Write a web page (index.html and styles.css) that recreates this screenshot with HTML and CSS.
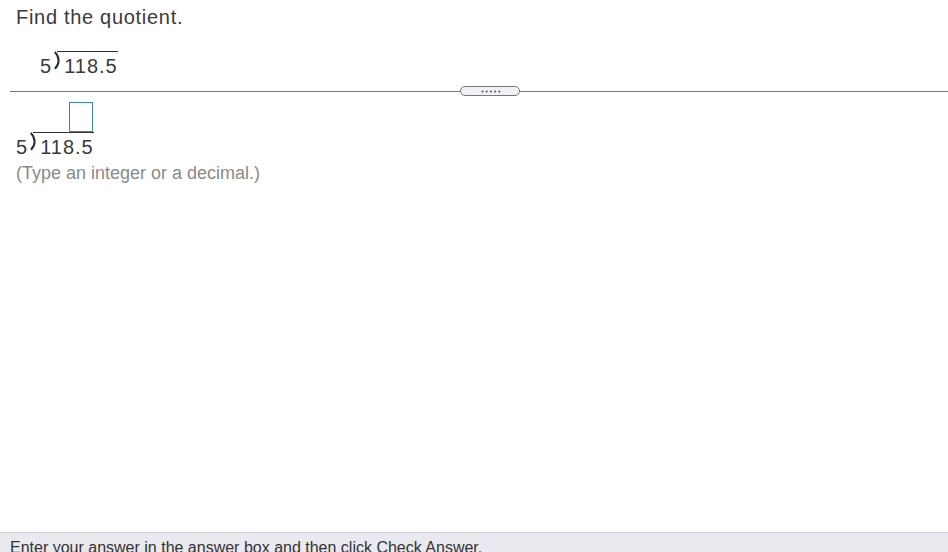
FILE: index.html
```html
<!DOCTYPE html>
<html>
<head>
<meta charset="utf-8">
<link rel="stylesheet" href="styles.css">
</head>
<body>
<div class="page">
  <div class="question">
    <div class="prompt">Find the quotient.</div>
    <div class="longdiv q-div">
      <span class="divisor">5</span>
      <svg class="bracket" width="7" height="25" viewBox="0 0 7 25"><path d="M1.8 0.8 Q5.6 5 5.6 9.5 Q5.6 14 2 17.8" fill="none" stroke="#2a2a2a" stroke-width="2"/></svg>
      <span class="dividend">118.5</span>
    </div>
  </div>
  <div class="divider">
    <div class="handle">
      <svg width="20" height="3" viewBox="0 0 20 3"><circle cx="1.5" cy="1.5" r="1" fill="#555"/><circle cx="5.7" cy="1.5" r="1" fill="#555"/><circle cx="9.9" cy="1.5" r="1" fill="#555"/><circle cx="14.1" cy="1.5" r="1" fill="#555"/><circle cx="18.3" cy="1.5" r="1" fill="#555"/></svg>
    </div>
  </div>
  <div class="answer">
    <div class="ans-div">
      <div class="quot-row"><span class="ansbox"></span></div>
      <div class="longdiv">
        <span class="divisor">5</span>
        <svg class="bracket" width="7" height="25" viewBox="0 0 7 25"><path d="M1.8 0.8 Q5.6 5 5.6 9.5 Q5.6 14 2 17.8" fill="none" stroke="#2a2a2a" stroke-width="2"/></svg>
        <span class="dividend">118.5</span>
      </div>
    </div>
    <div class="hint">(Type an integer or a decimal.)</div>
  </div>
  <div class="footer">Enter your answer in the answer box and then click Check Answer.</div>
</div>
</body>
</html>
```
FILE: styles.css
```css
html, body {
  margin: 0;
  padding: 0;
  background: #fff;
}
.page {
  width: 948px;
  height: 552px;
  overflow: hidden;
  font-family: "Liberation Sans", Arial, sans-serif;
  color: #3a3a3a;
  display: flex;
  flex-direction: column;
}
.question {
  padding: 5px 16px 0 16px;
}
.prompt {
  font-size: 20px;
  letter-spacing: 0.7px;
  line-height: 24px;
}
.longdiv {
  display: inline-flex;
  align-items: flex-end;
  font-size: 20px;
  letter-spacing: 1px;
  line-height: 20px;
}
.q-div {
  margin-top: 22px;
  margin-left: 24px;
}
.divisor {
  margin-right: 1px;
}
.bracket {
  display: block;
  align-self: flex-start;
  flex: none;
  margin-right: -3px;
}
.dividend {
  border-top: 1px solid #333;
  padding-top: 4px;
  padding-left: 7px;
}
.divider {
  margin-left: 10px;
  margin-top: 14px;
  border-top: 1px solid #777;
  height: 10px;
  position: relative;
}
.handle {
  position: absolute;
  left: 450px;
  top: -6px;
  width: 58px;
  height: 8px;
  border: 1px solid #777;
  border-radius: 5px;
  background: #f1f1f5;
  display: flex;
  align-items: center;
  justify-content: center;
}
.handle svg {
  display: block;
  margin-left: 1px;
}
.answer {
  padding: 0 16px;
  flex: 1;
}
.ans-div {
  display: inline-flex;
  flex-direction: column;
  align-items: flex-end;
}
.quot-row {
  display: flex;
  justify-content: flex-end;
}
.ansbox {
  display: block;
  width: 22px;
  height: 28px;
  border: 1px solid #3d8a96;
  margin-right: 1px;
}
.hint {
  color: #8a8a8a;
  font-size: 18px;
  line-height: 22px;
  margin-top: 5px;
}
.footer {
  height: 14px;
  background: #e9e9ef;
  border-top: 1px solid #cfd0d8;
  color: #333;
  font-size: 16px;
  padding: 5px 10px 0 10px;
  line-height: 20px;
  white-space: nowrap;
  overflow: hidden;
}
```
